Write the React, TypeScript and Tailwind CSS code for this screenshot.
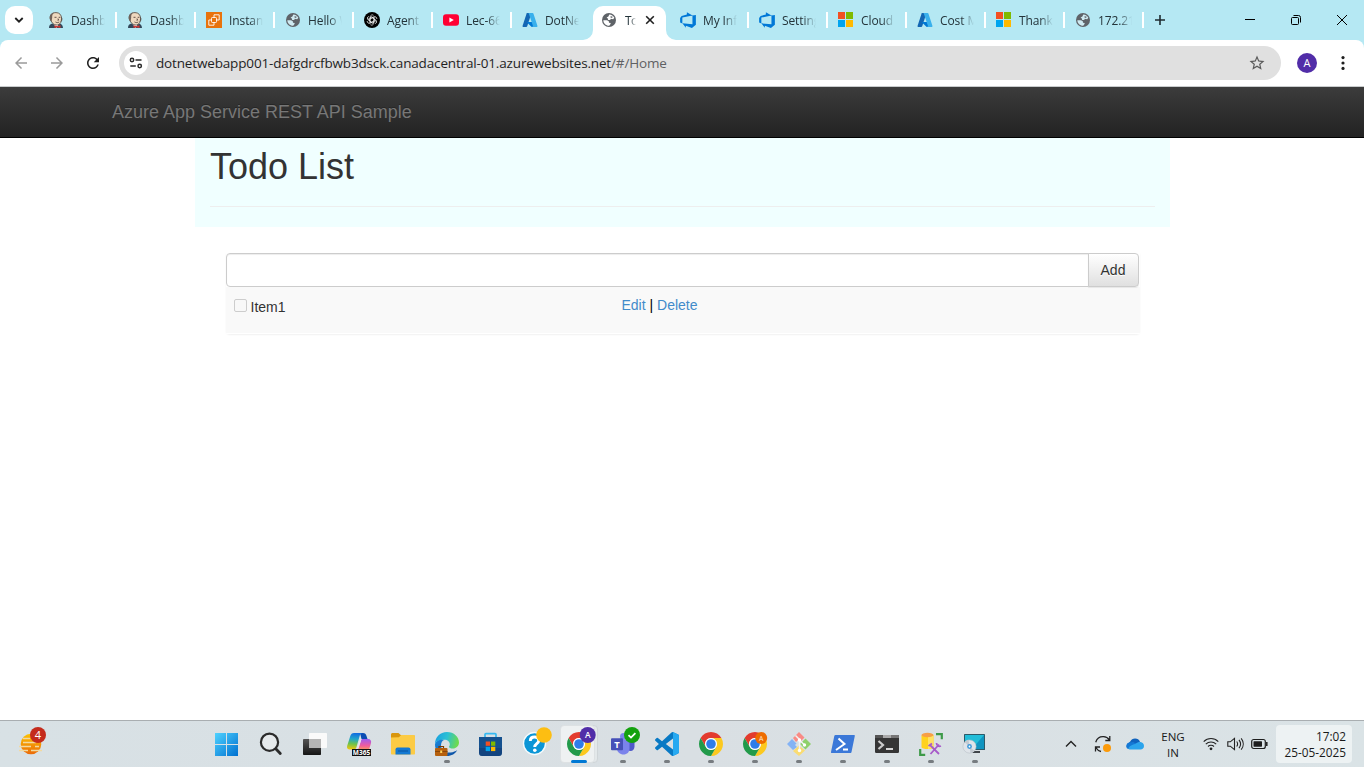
import React from "react";

const UI = "font-['Open_Sans','Noto_Sans',sans-serif]";
const PAGE = "font-['Liberation_Sans',Arial,sans-serif]";

/* ---------- tab icons ---------- */

const Jenkins = () => (
  <svg width="16" height="16" viewBox="0 0 16 16">
    <path d="M1 16c0-3 1.500-4 3.500-4.500h7c2 .5 3.200 1.500 3.500 4.500z" fill="#33475a" />
    <path d="M5.500 12l3 4 2.500-4z" fill="#fff" />
    <path d="M2.200 6C2 2.500 4.500.6 8 .6s5.600 2.400 5.500 5.800c0 2.800-.8 6-4 6.600C5.500 13.300 2.800 10 2.200 6z" fill="#efd9bf" stroke="#4b4540" strokeWidth=".8" />
    <path d="M1.700 6.500C1.500 3 3.500.8 6.500.6 4.500 2 4 3.500 4.200 5.500L3.600 9.500C2.600 9 1.800 8 1.700 6.500z" fill="#6f625a" />
    <path d="M13.500 5.500c.6 1 .4 3-.4 4" stroke="#4b3a33" strokeWidth=".9" fill="none" />
    <path d="M6.500 5.300h2M10.700 5.300h1.600M7.500 10c1.400.8 2.600.7 3.700 0M10 6.500l.6 1.700H9.500" stroke="#55413a" strokeWidth=".9" fill="none" />
    <path d="M6.500 13.200l3 1 3-1V16l-3-.8-3 .8z" fill="#d33833" />
  </svg>
);

const Ec2 = () => (
  <svg width="16" height="16" viewBox="0 0 16 16">
    <rect width="16" height="16" fill="#e8730c" />
    <g fill="none" stroke="#fff" strokeWidth=".9">
      <rect x="5.500" y="5.500" width="5" height="5" rx=".8" />
      <path d="M8 5.300V2.800h5.200V8h-2.500M5.300 8H2.800v5.200H8v-2.500" />
    </g>
  </svg>
);

const Globe = ({ light = "#cfeaf1" }: { light?: string }) => (
  <svg width="16" height="16" viewBox="0 0 16 16">
    <circle cx="8" cy="8" r="7" fill="#5f6368" />
    <path d="M8.300 2.400C10.500 2.500 12.500 3.800 13.300 5.800L12.200 7.300 9.800 6.800 9.200 8H7.200L6.800 6.500 5.600 5.600 7.400 4.500z" fill={light} />
    <path d="M2.300 8.200H6L7.800 9.200 8 10.700 9.800 11 9.200 12.500 8.200 13.700C5 13.800 2.400 11.300 2.300 8.200z" fill={light} />
    <path d="M9.500 4.200l2 .2-.3 1.500-1.700-.3z" fill="#5f6368" />
  </svg>
);

const GlobeOnWhite = () => <Globe light="#fff" />;

const OpenAi = () => (
  <svg width="16" height="16" viewBox="0 0 16 16">
    <circle cx="8" cy="8" r="8" fill="#000" />
    <g fill="none" stroke="#fff" strokeWidth=".7">
      {[0, 60, 120, 180, 240, 300].map((a) => (
        <path key={a} transform={`rotate(${a} 8 8)`} d="M6.200 8V4.800A2.100 2.100 0 0 1 9.500 3.300M6.200 6.700 8.900 5.100 11 6.200" />
      ))}
    </g>
  </svg>
);

const YouTube = () => (
  <svg width="16" height="16" viewBox="0 0 16 16">
    <rect x="0" y="2.300" width="16" height="11.400" rx="3" fill="#ff0033" />
    <path d="M6.400 5.500v5L10.800 8z" fill="#fff" />
  </svg>
);

const Azure = () => (
  <svg width="16" height="16" viewBox="0 0 16 16">
    <path d="M5.300 1h4.200L5.200 14.200c-.2.500-.5.800-1 .8H1.500c-.7 0-1.100-.6-.9-1.300L4.600 1.500c.1-.3.400-.5.700-.5z" fill="#1366b3" />
    <path d="M4.500 10h6.700l1 4.500-2.500.5z" fill="#0078d4" />
    <path d="M6.200 1h4.500c.4 0 .6.200.7.500l4 12.200c.2.700-.2 1.300-.9 1.300H10c.7 0 1.100-.6.900-1.300L6.800 1.500C6.700 1.200 6.500 1 6.200 1z" fill="#39b0ec" />
  </svg>
);

const DevOps = () => (
  <svg width="18" height="18" viewBox="0 0 16 16" className="-m-px shrink-0">
    <path
      fill="#0078d7"
      d="M15 3.622v8.512L11.500 15l-5.425-1.975v1.958L3.004 10.970l8.951.7V4.005L15 3.622zm-2.984.428L6.994 1v2.001L2.382 4.356 1 6.130v4.029l1.978.873V5.869l9.038-1.818z"
    />
  </svg>
);

const Microsoft = () => (
  <svg width="16" height="16" viewBox="0 0 16 16" shapeRendering="crispEdges">
    <path d="M0 0h7v7H0z" fill="#f25022" />
    <path d="M8 0h7v7H8z" fill="#7fba00" />
    <path d="M0 8h7v7H0z" fill="#00a4ef" />
    <path d="M8 8h7v7H8z" fill="#ffb900" />
  </svg>
);

type TabInfo = { icon: React.FC; label: string; active?: boolean };

const tabs: TabInfo[] = [
  { icon: Jenkins, label: "Dashb" },
  { icon: Jenkins, label: "Dashb" },
  { icon: Ec2, label: "Instan" },
  { icon: Globe, label: "Hello W" },
  { icon: OpenAi, label: "Agent" },
  { icon: YouTube, label: "Lec-66" },
  { icon: Azure, label: "DotNe" },
  { icon: GlobeOnWhite, label: "To", active: true },
  { icon: DevOps, label: "My Inf" },
  { icon: DevOps, label: "Setting" },
  { icon: Microsoft, label: "Cloud" },
  { icon: Azure, label: "Cost M" },
  { icon: Microsoft, label: "Thank" },
  { icon: Globe, label: "172.21" },
];

function Tab({ icon: Icon, label, active, divider }: TabInfo & { divider: boolean }) {
  if (active) {
    return (
      <div className="relative ml-[2px] mr-1 flex h-[34px] w-[73px] shrink-0 items-center self-end rounded-t-[10px] bg-white pb-[6px] pl-2">
        <svg className="absolute -left-[10px] bottom-0" width="10" height="10" viewBox="0 0 10 10">
          <path d="M10 0v10H0A10 10 0 0 0 10 0z" fill="#fff" />
        </svg>
        <svg className="absolute -right-[10px] bottom-0" width="10" height="10" viewBox="0 0 10 10">
          <path d="M0 0v10h10A10 10 0 0 1 0 0z" fill="#fff" />
        </svg>
        <Icon />
        <span className="ml-2 mt-px w-[11px] whitespace-nowrap text-[12px] leading-4 tracking-[-0.6px] [mask-image:linear-gradient(90deg,#000_50%,transparent)]">
          {label}
        </span>
        <svg className="ml-[9px] shrink-0" width="10" height="10" viewBox="0 0 10 10" stroke="#1f1f1f" strokeWidth="1.600">
          <path d="M1.200 1.200l7.600 7.600M8.800 1.200L1.200 8.800" />
        </svg>
      </div>
    );
  }
  return (
    <div className="flex h-10 w-[79px] shrink-0 items-center pl-[10px]">
      <span className="flex w-4 shrink-0 items-center justify-center">
        <Icon />
      </span>
      <span className="ml-[7px] mt-[2px] w-[34px] whitespace-nowrap text-[12px] leading-4 tracking-[-0.1px] [mask-image:linear-gradient(90deg,#000_62%,transparent)]">
        {label}
      </span>
      {divider && <span className="ml-auto h-4 w-[2px] bg-white" />}
    </div>
  );
}

function TabStrip() {
  return (
    <div className="flex h-10 shrink-0 items-center bg-[#b5e8f3] text-[#24343a]">
      <div className="ml-[5px] mr-[5px] flex h-7 w-7 items-center justify-center rounded-[10px] bg-white">
        <svg width="10" height="8" viewBox="0 0 10 8" fill="none" stroke="#1f1f1f" strokeWidth="1.800">
          <path d="M1.300 2L5 5.700 8.700 2" />
        </svg>
      </div>
      {tabs.map((t, i) => (
        <Tab key={i} {...t} divider={!tabs[i + 1]?.active} />
      ))}
      <svg className="ml-[10px]" width="12" height="12" viewBox="0 0 12 12" stroke="#1f2b30" strokeWidth="1.600">
        <path d="M6 1v10M1 6h10" />
      </svg>
      <div className="ml-auto flex items-center gap-9 pr-[17px]">
        <svg width="10" height="10" viewBox="0 0 10 10">
          <path d="M0 4.500h10" stroke="#000" />
        </svg>
        <svg width="10" height="10" viewBox="0 0 10 10" fill="none" stroke="#000">
          <rect x=".5" y="2.500" width="7" height="7" rx="1" />
          <path d="M2.500.5H7.500a2 2 0 0 1 2 2V7.500" />
        </svg>
        <svg width="10" height="10" viewBox="0 0 10 10" stroke="#000">
          <path d="M0 0l10 10M10 0L0 10" />
        </svg>
      </div>
    </div>
  );
}

function Toolbar() {
  return (
    <div className="shrink-0 bg-[#b5e8f3]">
      <div className="flex h-[47px] items-center rounded-t-lg border-b border-[#c9cccd] bg-white">
        <svg className="ml-3" width="18" height="18" viewBox="0 0 24 24" fill="#9b9b9b">
          <path d="M20 11H7.830l5.590-5.590L12 4l-8 8 8 8 1.410-1.410L7.830 13H20v-2z" />
        </svg>
        <svg className="ml-[18px]" width="18" height="18" viewBox="0 0 24 24" fill="#9b9b9b">
          <path d="M12 4l-1.410 1.410L16.170 11H4v2h12.170l-5.580 5.590L12 20l8-8z" />
        </svg>
        <svg className="ml-[18px]" width="18" height="18" viewBox="0 0 24 24" fill="#1f1f1f">
          <path d="M17.650 6.350C16.200 4.900 14.210 4 12 4c-4.420 0-7.990 3.580-7.990 8s3.570 8 7.990 8c3.730 0 6.840-2.550 7.730-6h-2.080c-.82 2.330-3.040 4-5.650 4-3.310 0-6-2.690-6-6s2.690-6 6-6c1.660 0 3.140.69 4.220 1.780L13 11h7V4l-2.350 2.350z" />
        </svg>
        <div className="ml-[17px] flex h-[34px] w-[1162px] items-center rounded-full bg-[#e0e0e0] pl-[5px]">
          <div className="flex h-6 w-6 items-center justify-center rounded-full bg-white">
            <svg width="14" height="14" viewBox="0 0 14 14" fill="none" stroke="#2a2a2a" strokeWidth="1.500">
              <circle cx="3" cy="4" r="1.700" />
              <path d="M6.500 4h6M1.300 10h5.500" />
              <circle cx="10.700" cy="10" r="1.700" />
            </svg>
          </div>
          <span className="ml-2 whitespace-nowrap text-[13.500px] leading-5 tracking-[-0.155px] text-[#1f1f1f]">
            dotnetwebapp001-dafgdrcfbwb3dsck.canadacentral-01.azurewebsites.net
            <span className="text-[#5f6063]">/#/Home</span>
          </span>
          <svg className="ml-auto mr-[15px]" width="18" height="18" viewBox="0 0 24 24" fill="#5a5a5a">
            <path d="M22 9.240l-7.190-.62L12 2 9.190 8.630 2 9.240l5.460 4.730L5.820 21 12 17.270 18.180 21l-1.630-7.030L22 9.240zM12 15.400l-3.760 2.270 1-4.280-3.320-2.880 4.380-.38L12 6.100l1.710 4.040 4.380.38-3.320 2.880 1 4.280L12 15.400z" />
          </svg>
        </div>
        <div className="ml-4 flex h-5 w-5 items-center justify-center rounded-full bg-[#512da8] pb-px text-[11px] leading-none text-white">A</div>
        <svg className="ml-[24px]" width="4" height="16" viewBox="0 0 4 16" fill="#1f1f1f">
          <circle cx="2" cy="2.600" r="1.600" />
          <circle cx="2" cy="8" r="1.600" />
          <circle cx="2" cy="13.400" r="1.600" />
        </svg>
      </div>
    </div>
  );
}

function TodoPage() {
  return (
    <main className={`flex-1 bg-white text-[14px] leading-5 text-[#333] ${PAGE}`}>
      <nav className="h-[51px] border-b border-black bg-linear-to-b from-[#3c3c3c] to-[#222] pl-28 pt-[15px] text-[18px] leading-5 text-[#777] [text-shadow:0_-1px_0_rgba(0,0,0,.25)]">
        Azure App Service REST API Sample
      </nav>
      <header className="ml-[195px] h-[89px] w-[975px] bg-[#f0ffff] px-[15px] pt-[9px]">
        <h1 className="text-[36px] font-medium leading-10">Todo List</h1>
        <hr className="mt-[19px] border-[#eee]" />
      </header>
      <section className="ml-[226px] mt-[26px] w-[914px] rounded-b-[4px] shadow-[0_1px_2px_rgba(0,0,0,.06)]">
        <div className="flex w-[913px]">
          <input className="h-[34px] w-[863px] rounded-l-[4px] border border-[#ccc] bg-white px-3 shadow-[inset_0_1px_1px_rgba(0,0,0,.075)] outline-none" />
          <button className="-ml-px h-[34px] w-[51px] rounded-r-[4px] border border-[#ccc] bg-linear-to-b from-white to-[#e0e0e0] pr-px shadow-[inset_0_1px_0_rgba(255,255,255,.15),0_1px_1px_rgba(0,0,0,.075)] [text-shadow:0_1px_0_#fff]">
            Add
          </button>
        </div>
        <div className="flex h-[46px] bg-[#f9f9f9] pl-2">
          <div className="flex w-[387.500px] pt-[10px]">
            <span className="mt-[2px] h-[13px] w-[13px] rounded-[2px] border border-[#cdcdcd] bg-[#f8f8f8]" />
            <span className="ml-[3.500px]">Item1</span>
          </div>
          <div className="pt-2">
            <a className="text-[#428bca]">Edit</a> <span className="text-black">|</span> <a className="text-[#428bca]">Delete</a>
          </div>
        </div>
        <div className="h-px rounded-b-[4px] bg-white" />
      </section>
    </main>
  );
}

/* ---------- taskbar icons ---------- */

const Svg = ({ children }: { children: React.ReactNode }) => (
  <svg width="24" height="24" viewBox="0 0 24 24" className="overflow-visible">
    {children}
  </svg>
);

const Windows = () => (
  <Svg>
    <defs>
      <linearGradient id="win" x1="0" y1="0" x2="1" y2="1">
        <stop offset="0" stopColor="#4fd2ff" />
        <stop offset="1" stopColor="#0070d0" />
      </linearGradient>
    </defs>
    <path d="M0 1h11v11H0zM12 1h11v11H12zM0 13h11v11H0zM12 13h11v11H12z" fill="url(#win)" />
  </Svg>
);

const Search = () => (
  <Svg>
    <circle cx="10.500" cy="10.200" r="8.600" fill="#e6eaec" stroke="#2b2b2b" strokeWidth="2.200" />
    <path d="M17 17l4.300 4.500" stroke="#2b2b2b" strokeWidth="2.800" strokeLinecap="round" />
  </Svg>
);

const TaskView = () => (
  <Svg>
    <defs>
      <linearGradient id="tv" x1="0" y1="0" x2="0" y2="1">
        <stop offset="0" stopColor="#555" />
        <stop offset="1" stopColor="#151515" />
      </linearGradient>
    </defs>
    <rect x="0" y="7" width="18" height="16" rx=".8" fill="url(#tv)" />
    <rect x="6" y="1" width="18" height="15" rx=".8" fill="#fafafa" />
    <path d="M6 7h12v9H6z" fill="#b5b5b5" />
  </Svg>
);

const Copilot = () => (
  <Svg>
    <defs>
      <linearGradient id="cpa" x1=".3" y1="0" x2=".2" y2="1">
        <stop offset="0" stopColor="#126ee0" />
        <stop offset=".35" stopColor="#21a6c9" />
        <stop offset=".65" stopColor="#6fc24a" />
        <stop offset="1" stopColor="#f5c60a" />
      </linearGradient>
      <linearGradient id="cpb" x1="0" y1="0" x2="0" y2="1">
        <stop offset="0" stopColor="#9d5cf0" />
        <stop offset=".6" stopColor="#ef5c9e" />
        <stop offset="1" stopColor="#fb9a5c" />
      </linearGradient>
    </defs>
    <path d="M13 1h3c2 0 3 1 3.500 3l1 3h-6z" fill="#0b4db3" />
    <path d="M7 1h9c-2 0-3 1.500-3.500 3.500L9.500 15c-.5 1.800-1.500 2.500-3.500 2.500H3c-2.500 0-3.500-1.500-2.800-3.700L3.300 4C4 2 5 1 7 1z" fill="url(#cpa)" />
    <path d="M15 7h6c2.500 0 3.600 1.800 3 4l-2 7H9c1.500 0 2-.5 2.500-2.500l2.300-6.300C14 8.500 14.300 7 15 7z" fill="url(#cpb)" />
    <path d="M14.500 7l-3 9.500h-1.500l3-9.500z" fill="#e8e2ee" />
    <rect x="5" y="17" width="19" height="7" fill="#111" />
    <text x="14.500" y="23" fontSize="6.500" fontWeight="700" textAnchor="middle" fill="#fff">M365</text>
  </Svg>
);

const Folder = () => (
  <Svg>
    <path d="M0 2.500C0 1.700.7 1 1.500 1h6L10 3.300h12.500c.8 0 1.500.6 1.500 1.500V10H0z" fill="#d9960e" />
    <path d="M0 6V5.500l7.800-.2L10.300 3H22.500c.8 0 1.500.7 1.500 1.500V21.500c0 .8-.4 1-1 1H1c-.6 0-1-.3-1-1z" fill="#fccb45" />
    <path d="M4.500 17.500a2 2 0 0 1 2-2h11a2 2 0 0 1 2 2v5h-15z" fill="#1479d2" />
    <path d="M7 19h10" stroke="#0a5ba8" strokeWidth="1.200" />
  </Svg>
);

const Edge = () => (
  <Svg>
    <defs>
      <linearGradient id="eda" x1="0" y1=".2" x2="1" y2=".4">
        <stop offset="0" stopColor="#1a9fe0" />
        <stop offset=".5" stopColor="#2bc0d4" />
        <stop offset="1" stopColor="#6edb4c" />
      </linearGradient>
      <linearGradient id="edb" x1="0" y1="0" x2="1" y2="1">
        <stop offset="0" stopColor="#1a86dc" />
        <stop offset="1" stopColor="#0c4c9e" />
      </linearGradient>
    </defs>
    <path d="M0 12C0 5 5 0 12 0s12 5 12 10.500c0 3.500-3 6-6 6-2.500 0-4-.8-4-1.600 0-.6.8-1 .8-2.600 0-2.500-2.300-4.500-5.300-4.500C5.500 7.800.8 9 0 12z" fill="url(#eda)" />
    <path d="M0 12.500C.5 9 5 7.200 9 8c-2 .8-3 3-3 5.500 0 4.500 4.500 7.500 9.500 7 3-.3 5-1.200 6.800-2.500C20.500 21.800 16.500 24 12 24 5 24-.2 19 0 12.500z" fill="url(#edb)" />
    <rect x="0" y="16" width="12.500" height="8" rx="1" fill="#b6600e" />
    <path d="M4 16v-1.500h4.500V16" fill="none" stroke="#7a3c05" strokeWidth="1.200" />
    <path d="M0 19.500h12.500" stroke="#8a4708" />
    <rect x="5.200" y="18.500" width="2" height="2.500" fill="#ffd25a" />
  </Svg>
);

const Store = () => (
  <Svg>
    <path d="M6 6V2.600C6 2 6.400 1.600 7 1.600h9c.6 0 1 .4 1 1V6" fill="none" stroke="#35b9f1" strokeWidth="1.700" />
    <path d="M0 5h23v15.500a3.500 3.500 0 0 1-3.500 3.500h-16A3.500 3.500 0 0 1 0 20.500z" fill="#15518f" />
    <path d="M0 16h23v4.500a3.500 3.500 0 0 1-3.500 3.500h-16A3.500 3.500 0 0 1 0 20.500z" fill="#123f78" opacity=".7" />
    <path d="M6.700 9.500h4.300v4.300H6.700z" fill="#f25022" />
    <path d="M12 9.500h4.300v4.300H12z" fill="#7fba00" />
    <path d="M6.700 14.800h4.300v4.300H6.700z" fill="#00a4ef" />
    <path d="M12 14.800h4.300v4.300H12z" fill="#ffb900" />
  </Svg>
);

const Help = () => (
  <Svg>
    <circle cx="11.500" cy="11.500" r="11" fill="#0c96d6" stroke="#f4fafc" strokeWidth="1.400" />
    <path d="M7.300 9c0-2.500 1.800-4 4.200-4s4.200 1.500 4.200 3.700c0 3-4 3-4 6.300" fill="none" stroke="#fff" strokeWidth="2.900" />
    <circle cx="11.800" cy="18.300" r="1.800" fill="#fff" />
    <circle cx="21" cy="3" r="7.800" fill="#fdbe12" />
  </Svg>
);

const ChromeArt = () => (
  <>
    <path d="M12 6H22.390A12 12 0 0 0 1.610 6L6.800 15A6 6 0 0 1 12 6z" fill="#e33b2e" />
    <path d="M22.390 6A12 12 0 0 1 12 24L17.200 15A6 6 0 0 0 12 6z" fill="#fcc91f" />
    <path d="M12 24A12 12 0 0 1 1.610 6L6.800 15A6 6 0 0 0 17.200 15z" fill="#229a4a" />
    <circle cx="12" cy="12" r="6" fill="#fff" />
    <circle cx="12" cy="12" r="4.800" fill="#2f7de9" />
  </>
);

const Chrome = () => (
  <Svg>
    <ChromeArt />
  </Svg>
);

const ChromeProfile = () => (
  <Svg>
    <ChromeArt />
    <circle cx="20.700" cy="3" r="8" fill="#512da8" />
    <text x="20.700" y="6" fontSize="8.500" fontWeight="600" textAnchor="middle" fill="#fff">A</text>
  </Svg>
);

const ChromeOrange = () => (
  <Svg>
    <ChromeArt />
    <circle cx="18.200" cy="6" r="6" fill="#ee6c00" />
    <text x="18.200" y="8.600" fontSize="7" textAnchor="middle" fill="#ffe3c8">A</text>
  </Svg>
);

const Teams = () => (
  <Svg>
    <circle cx="12.500" cy="4.500" r="3.500" fill="#7b83eb" />
    <path d="M16 8h7.500v6.500c0 2.500-1.600 4.500-4 4.500S15.500 17 15.500 15z" fill="#5059c9" />
    <path d="M6 8h12.500v8.500c0 3.800-2.500 6-6 6s-6.500-2.500-6.500-6z" fill="#7b83eb" />
    <rect x="0" y="6.300" width="12" height="12" rx="1" fill="#4650b8" />
    <text x="6" y="15.800" fontSize="9.500" fontWeight="700" textAnchor="middle" fill="#fff">T</text>
    <circle cx="21" cy="3" r="8" fill="#13a10e" />
    <path d="M17.500 3.200l2.500 2.400 4.400-4.400" fill="none" stroke="#fff" strokeWidth="1.800" />
  </Svg>
);

const VsCode = () => (
  <Svg>
    <path
      fill="#0879c4"
      d="M23.150 2.587L18.210.21a1.494 1.494 0 0 0-1.705.29l-9.460 8.630-4.120-3.128a.999.999 0 0 0-1.276.057L.327 7.261A1 1 0 0 0 .326 8.740L3.899 12 .326 15.260a1 1 0 0 0 .001 1.479L1.650 17.940a.999.999 0 0 0 1.276.057l4.120-3.128 9.460 8.630a1.492 1.492 0 0 0 1.704.29l4.942-2.377A1.500 1.500 0 0 0 24 20.060V3.939a1.500 1.500 0 0 0-.85-1.352zm-5.146 14.861L10.826 12l7.178-5.448v10.896z"
    />
    <path d="M18 0l5.150 2.587c.5.200.85.800.85 1.350V20.060c0 .6-.3 1.100-.85 1.350L18 24z" fill="#27a9f1" />
  </Svg>
);

const Git = () => (
  <Svg>
    <path d="M12 0l5.500 5.500-3.500 3.500-2-2-3 3-3-4z" fill="#f98b85" />
    <path d="M5 7l4.500 4.500L8 13l2 2-4 3-6-6z" fill="#84b3f5" />
    <path d="M18.500 6.500L24 12l-5.500 5.500L13 12z" fill="#8ed06a" />
    <path d="M12 13.500l6 5L12 24l-6-5z" fill="#fadc72" />
    <path d="M8.500 3.500l4 4v12M12.500 8l5 5" fill="none" stroke="#f1f3f4" strokeWidth="1.500" />
    <circle cx="12.500" cy="8" r="1.700" fill="#fff" />
    <circle cx="17.500" cy="13" r="1.700" fill="#fff" />
    <circle cx="12.500" cy="18.500" r="1.700" fill="#fff" />
  </Svg>
);

const PowerShell = () => (
  <Svg>
    <path d="M4.500 3H23c.6 0 .9.400.8 1L20.500 20c-.1.600-.6 1-1.200 1H.8c-.6 0-.9-.4-.8-1L3.300 4c.1-.6.600-1 1.200-1z" fill="#3b78d8" />
    <path d="M7.500 6.500l6 5.500-8.500 6M12 17.500h5" fill="none" stroke="#fff" strokeWidth="2" />
  </Svg>
);

const Terminal = () => (
  <Svg>
    <rect x="0" y="3" width="24" height="18" rx="1.200" fill="#353535" />
    <path d="M0 6V4.200A1.200 1.200 0 0 1 1.200 3H8v3z" fill="#555" />
    <path d="M8 3h8v3H8z" fill="#aaa" />
    <path d="M16 3h6.800A1.200 1.200 0 0 1 24 4.200V6h-8z" fill="#777" />
    <path d="M3.500 9l4.500 4-4.500 4" fill="none" stroke="#ccc" strokeWidth="2.200" />
    <path d="M11 17h7" stroke="#fff" strokeWidth="1.600" />
  </Svg>
);

const Ssms = () => (
  <Svg>
    <path d="M17 2.200h5.800v5M1.200 17v5.800h5" fill="none" stroke="#3d9a48" strokeWidth="2.200" />
    <path d="M2.500 3.300v11.700c0 2.700 12 2.700 12 0V3.300z" fill="#ffd21c" />
    <path d="M9 4.500v12.500c3-.1 5.500-.8 5.500-2V3.300z" fill="#ffe264" />
    <ellipse cx="8.500" cy="3" rx="6" ry="2.200" fill="#f79f46" />
    <path d="M11.500 13.500l8.500 8.500M20 12.500L11.500 22M9.500 14l3.500-2.500M17.500 11c.2 2.500 2 4 4.500 3" fill="none" stroke="#a75bc9" strokeWidth="1.800" />
  </Svg>
);

const RemotePc = () => (
  <Svg>
    <path d="M8 19h9v2H8z" fill="#40454a" />
    <rect x="1" y="2" width="21" height="16" rx=".6" fill="#2c5a69" />
    <path d="M2 3h19v14H2z" fill="#22bdd8" />
    <path d="M21 3v14H9z" fill="#1094c0" />
    <circle cx="6.500" cy="14.500" r="6.600" fill="#dfe4e9" stroke="#b3bac1" strokeWidth=".5" />
    <path d="M6.500 14.500L1.500 10a6.800 6.800 0 0 1 4-2.300zM6.500 14.500l5 4.500a6.800 6.800 0 0 1-4 2.300z" fill="#c3cad1" />
    <circle cx="6.500" cy="14.500" r="2.400" fill="#3e9bdb" />
    <circle cx="6.500" cy="14.500" r=".9" fill="#fff" />
  </Svg>
);

const apps: { icon: React.FC; state?: "open" | "active" }[] = [
  { icon: Windows },
  { icon: Search },
  { icon: TaskView },
  { icon: Copilot },
  { icon: Folder },
  { icon: Edge, state: "open" },
  { icon: Store },
  { icon: Help },
  { icon: ChromeProfile, state: "active" },
  { icon: Teams, state: "open" },
  { icon: VsCode, state: "open" },
  { icon: Chrome, state: "open" },
  { icon: ChromeOrange, state: "open" },
  { icon: Git, state: "open" },
  { icon: PowerShell, state: "open" },
  { icon: Terminal, state: "open" },
  { icon: Ssms, state: "open" },
  { icon: RemotePc, state: "open" },
];

function Taskbar() {
  return (
    <footer className="flex h-[47px] shrink-0 items-center border-t border-[#a9aeb1] bg-linear-to-r from-[#d8e1e5] via-[#d9dfe3] to-[#dae3e6] text-[#191919]">
      <div className="flex w-[203px] pl-[19px]">
        <svg width="28" height="34" viewBox="0 0 28 34">
          <defs>
            <linearGradient id="sun" x1="0" y1="0" x2="0" y2="1">
              <stop offset="0" stopColor="#fdc300" />
              <stop offset="1" stopColor="#ea6a09" />
            </linearGradient>
          </defs>
          <circle cx="12" cy="17" r="10.300" fill="url(#sun)" />
          <path d="M4 11.500h7M4 15.500h13M0 19.500h12M16 19.500h4M0 23.500h9M12 23.500h11" stroke="#f3d9a0" strokeWidth="1.500" />
          <circle cx="19" cy="8" r="8" fill="#c42b1c" />
          <text x="19" y="12" fontSize="11" textAnchor="middle" fill="#fff">4</text>
        </svg>
      </div>
      {apps.map(({ icon: Icon, state }, i) => (
        <div key={i} className="relative flex h-[46px] w-11 shrink-0 items-center justify-center pl-[4px]">
          {state === "active" && (
            <>
              <span className="absolute left-[5px] top-[4px] h-[38px] w-[38px] rounded-[4px] border border-[#cfd5d8] bg-[#e3e8ea]" />
              <span className="absolute left-[5px] top-[4px] h-[38px] w-[35px] rounded-[4px] border border-[#dde1e3] bg-[#eef1f2]" />
            </>
          )}
          <span className="relative flex">
            <Icon />
          </span>
          {state === "open" && <span className="absolute bottom-[4px] left-[21px] h-[3px] w-[6px] rounded-full bg-[#777c80]" />}
          {state === "active" && <span className="absolute bottom-[4px] left-4 h-[3px] w-4 rounded-full bg-[#0078d4]" />}
        </div>
      ))}
      <div className="ml-[70px] flex items-center">
        <svg width="12" height="8" viewBox="0 0 12 8" fill="none" stroke="#222" strokeWidth="1.400">
          <path d="M1 6.500l5-5 5 5" />
        </svg>
        <svg className="ml-[17px]" width="18" height="18" viewBox="0 0 18 18" fill="none" stroke="#222" strokeWidth="1.300">
          <path d="M1.700 7.200C3 3.500 6 1.500 9.500 1.700c2.500.1 4.500 1.300 6 3.300M15.800 1v4.500h-4.500M1.500 16.500V12h4.500M1.800 12.500C3 14.500 4.500 16 7 16.500" />
          <circle cx="13" cy="13" r="4" fill="#fb9a0a" stroke="none" />
        </svg>
        <svg className="ml-[14px]" width="18" height="12" viewBox="0 0 18 12">
          <path d="M4 10.500a4 4 0 0 1 .2-7A5.500 5.500 0 0 1 14 3.700z" fill="#0f63bd" />
          <path d="M2 11A3.500 3.500 0 0 1 3.300 4.500l4-.5L14 8z" fill="#1478d4" />
          <path d="M3.500 11.500l-1-.4C3 7.500 7 6.500 9 6c2-1.500 3.500-2.200 5.500-2 2 .3 3.500 1.900 3.500 4s-1.500 3.500-3.500 3.500z" fill="#2ba4ec" />
        </svg>
        <div className="ml-[17px] mt-px w-6 whitespace-nowrap text-center text-[11.500px] leading-4">
          ENG
          <br />
          IN
        </div>
        <svg className="ml-[18px]" width="16" height="14" viewBox="0 0 16 14" fill="none" stroke="#222" strokeWidth="1.100">
          <path d="M.7 4.700C4.800.5 11.200.5 15.300 4.700M2.800 7.200C5.800 4.200 10.200 4.200 13.200 7.200M5 9.500c1.700-1.700 4.300-1.700 6 0" />
          <circle cx="8" cy="11.800" r="1.400" fill="#222" stroke="none" />
        </svg>
        <svg className="ml-2" width="17" height="16" viewBox="0 0 17 16" fill="none" stroke="#222" strokeWidth="1.100">
          <path d="M.8 5.800h2.500L7.500 2.300v11.400L3.300 10.200H.8zM9.700 5.500c1.100 1.500 1.100 3.500 0 5M12 3.800c1.900 2.500 1.900 5.900 0 8.400M14.200 2.300c2.700 3.400 2.700 8 0 11.400" />
        </svg>
        <svg className="ml-[7px]" width="17" height="12" viewBox="0 0 17 12" fill="none" stroke="#1d1d1d" strokeWidth="1.200">
          <rect x=".7" y="1.500" width="13.600" height="9" rx="2" />
          <rect x="2.500" y="3.300" width="8.500" height="5.400" rx=".6" fill="#1d1d1d" stroke="none" />
          <path d="M15.800 4v4" strokeWidth="1.500" />
        </svg>
      </div>
      <div className="ml-auto mr-3 flex h-[38px] w-[76px] flex-col justify-center rounded-[4px] bg-[#edf2f3] pr-[6px] text-right text-[11.800px] leading-4">
        <span>17:02</span>
        <span>25-05-2025</span>
      </div>
    </footer>
  );
}

export default function App() {
  return (
    <div className={`flex h-[767px] w-[1364px] flex-col overflow-hidden bg-white ${UI}`}>
      <TabStrip />
      <Toolbar />
      <TodoPage />
      <Taskbar />
    </div>
  );
}
